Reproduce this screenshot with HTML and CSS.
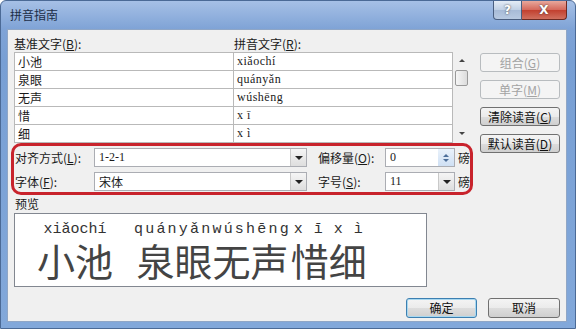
FILE: index.html
```html
<!DOCTYPE html>
<html lang="zh-CN">
<head>
    <meta charset="UTF-8">
    <title>拼音指南</title>
    <link rel="stylesheet" href="styles.css">
</head>
<body>
    <div class="window">
        <!-- Barra de título -->
        <div class="titlebar">
            <span class="title">拼音指南</span>
            <div class="caption-btns">
                <span class="cap-btn help">?</span>
                <span class="cap-btn close">X</span>
            </div>
        </div>

        <div class="client">
            <div class="top">
                <div class="lists">
                    <div class="list-labels">
                        <span>基准文字(<u>B</u>):</span>
                        <span>拼音文字(<u>R</u>):</span>
                    </div>
                    <div class="list-wrap">
                        <div class="grid">
                            <div class="cell">小池</div><div class="cell py">xiǎochí</div>
                            <div class="cell">泉眼</div><div class="cell py">quányǎn</div>
                            <div class="cell">无声</div><div class="cell py">wúshēng</div>
                            <div class="cell">惜</div><div class="cell py">x ī</div>
                            <div class="cell">细</div><div class="cell py">x ì</div>
                        </div>
                        <div class="scrollbar">
                            <span class="arrow-up"></span>
                            <span class="thumb"></span>
                            <span class="arrow-down"></span>
                        </div>
                    </div>
                </div>

                <div class="side">
                    <button class="btn disabled">组合(<u>G</u>)</button>
                    <button class="btn disabled">单字(<u>M</u>)</button>
                    <button class="btn">清除读音(<u>C</u>)</button>
                    <button class="btn">默认读音(<u>D</u>)</button>
                </div>
            </div>

            <!-- Caixa destacada -->
            <div class="options">
                <div class="opt-row">
                    <span class="lbl1">对齐方式(<u>L</u>):</span>
                    <div class="combo wide"><span>1-2-1</span><span class="drop"></span></div>
                    <span class="lbl2">偏移量(<u>O</u>):</span>
                    <div class="combo small"><span>0</span><span class="spin"><i class="up"></i><i class="down"></i></span></div>
                    <span class="unit">磅</span>
                </div>
                <div class="opt-row">
                    <span class="lbl1">字体(<u>F</u>):</span>
                    <div class="combo wide"><span>宋体</span><span class="drop"></span></div>
                    <span class="lbl2">字号(<u>S</u>):</span>
                    <div class="combo small"><span>11</span><span class="drop"></span></div>
                    <span class="unit">磅</span>
                </div>
            </div>

            <div class="preview-label">预览</div>
            <div class="preview">
                <div class="group g1">
                    <div class="pin">xiǎochí</div>
                    <div class="base">小池</div>
                </div>
                <div class="group g2">
                    <div class="pin">quányǎnwúshēng</div>
                    <div class="base">泉眼无声</div>
                </div>
                <div class="group g3">
                    <div class="pin">x ī x ì</div>
                    <div class="base">惜细</div>
                </div>
            </div>

            <div class="footer">
                <button class="btn default">确定</button>
                <button class="btn">取消</button>
            </div>
        </div>
    </div>
</body>
</html>
```

FILE: styles.css
```css
body {
    margin: 0;
    background-color: #fff;
    font-family: "Noto Sans CJK SC", "Liberation Sans", sans-serif;
    font-size: 12px;
    color: #1a1a1a;
}
u {
    text-decoration: underline;
}
.window {
    width: 576px;
    height: 329px;
    box-sizing: border-box;
    border: 1px solid #4b6a96;
    border-radius: 6px 6px 0 0;
    background: linear-gradient(to bottom, #a6c0e6, #7fa3d6 28px, #789fd4 60px, #82a8da);
    padding: 0 8px 6px 6px;
}
.titlebar {
    height: 28px;
    display: flex;
    justify-content: space-between;
    align-items: flex-start;
}
.title {
    margin-top: 5px;
    margin-left: 3px;
    font-size: 12px;
    color: #1b2d47;
}
.caption-btns {
    display: flex;
}
.cap-btn {
    height: 19px;
    box-sizing: border-box;
    border: 1px solid #4a5f80;
    border-top: none;
    display: flex;
    align-items: center;
    justify-content: center;
    font-family: "DejaVu Sans", sans-serif;
    font-weight: bold;
    color: #fff;
    text-shadow: 0 0 2px #333;
}
.help {
    width: 29px;
    border-radius: 0 0 0 4px;
    background: linear-gradient(to bottom, #e4ecf6, #bfcfe4 50%, #a7bbd7 51%, #b8cae2);
    font-size: 12px;
}
.close {
    width: 45px;
    border-left: none;
    border-color: #6d2a22;
    border-radius: 0 0 4px 0;
    background: linear-gradient(to bottom, #e8a89c, #d4675a 50%, #c2402f 51%, #d0705f);
    font-size: 12px;
}
.client {
    height: 293px;
    box-sizing: border-box;
    background-color: #f0f0f0;
    border: 1px solid #8fa6c6;
    padding: 6px 6px 0 6px;
}
.top {
    display: flex;
    gap: 9px;
    height: 107px;
}
.lists {
    width: 457px;
}
.list-labels {
    display: grid;
    grid-template-columns: 220px 220px;
    height: 16px;
    line-height: 16px;
}
.list-wrap {
    display: flex;
}
.grid {
    display: grid;
    grid-template-columns: 218px 218px;
    grid-auto-rows: 17px;
    gap: 1px;
    padding: 1px;
    background-color: #b9b9b9;
}
.cell {
    background-color: #fff;
    line-height: 17px;
    padding-left: 3px;
    font-size: 12px;
    overflow: hidden;
}
.cell.py {
    font-family: "Liberation Serif", serif;
    font-size: 12px;
    letter-spacing: 0.5px;
}
.scrollbar {
    width: 18px;
    position: relative;
    background-color: #f0f0f0;
}
.arrow-up, .arrow-down {
    position: absolute;
    left: 6px;
    width: 0;
    height: 0;
    border-left: 3px solid transparent;
    border-right: 3px solid transparent;
}
.arrow-up {
    top: 7px;
    border-bottom: 3px solid #444;
}
.arrow-down {
    bottom: 8px;
    border-top: 3px solid #444;
}
.thumb {
    position: absolute;
    top: 18px;
    left: 2px;
    width: 13px;
    height: 16px;
    box-sizing: border-box;
    border: 1px solid #9a9a9a;
    border-radius: 2px;
    background: linear-gradient(to right, #f6f6f6, #dcdcdc);
}
.side {
    width: 80px;
    padding-top: 17px;
    display: flex;
    flex-direction: column;
    gap: 8px;
}
.side .btn {
    flex-shrink: 0;
}
.btn {
    font-family: "Noto Sans CJK SC", sans-serif;
    font-size: 12px;
    height: 19px;
    padding: 0;
    line-height: 16px;
    box-sizing: border-box;
    border: 1px solid #707070;
    border-radius: 3px;
    background: linear-gradient(to bottom, #f4f4f4, #ebebeb 50%, #dddddd 51%, #cfcfcf);
    color: #111;
}
.btn.disabled {
    border-color: #b8bcbf;
    background: #f4f4f4;
    color: #a3a3a3;
}
.options {
    margin-left: -3px;
    width: 462px;
    height: 52px;
    box-sizing: border-box;
    border: 3px solid #c8232c;
    border-radius: 10px;
    padding: 2px 0 0 1px;
    display: flex;
    flex-direction: column;
    gap: 5px;
}
.opt-row {
    display: flex;
    align-items: center;
    height: 19px;
}
.lbl1 {
    width: 79px;
}
.lbl2 {
    margin-left: 11px;
    width: 67px;
}
.combo {
    height: 19px;
    box-sizing: border-box;
    border: 1px solid #abadb3;
    background-color: #fff;
    display: flex;
    justify-content: space-between;
    align-items: center;
    padding-left: 4px;
    font-family: "Liberation Serif", "Noto Sans CJK SC", serif;
    font-size: 12px;
}
.combo.wide {
    width: 213px;
}
.combo.small {
    width: 70px;
}
.drop {
    width: 16px;
    height: 17px;
    box-sizing: border-box;
    border-left: 1px solid #c9c9c9;
    background: linear-gradient(to bottom, #f5f5f5, #dedede);
    position: relative;
}
.drop::after {
    content: "";
    position: absolute;
    left: 4px;
    top: 7px;
    border-left: 4px solid transparent;
    border-right: 4px solid transparent;
    border-top: 4px solid #222;
}
.spin {
    width: 16px;
    height: 17px;
    display: flex;
    flex-direction: column;
    align-items: center;
    justify-content: center;
    gap: 2px;
    background: linear-gradient(to bottom, #eaf2fb, #cfe0f4);
}
.spin i {
    width: 0;
    height: 0;
    border-left: 3px solid transparent;
    border-right: 3px solid transparent;
}
.spin .up {
    border-bottom: 3px solid #4d6f9a;
}
.spin .down {
    border-top: 3px solid #4d6f9a;
}
.unit {
    margin-left: 3px;
}
.preview-label {
    height: 18px;
    line-height: 18px;
    padding-left: 1px;
}
.preview {
    width: 413px;
    height: 74px;
    box-sizing: border-box;
    border: 1px solid #828790;
    background-color: #fff;
    display: flex;
    align-items: flex-start;
    padding: 8px 0 0 22px;
}
.group {
    display: flex;
    flex-direction: column;
    align-items: center;
}
.pin {
    font-family: "Liberation Mono", monospace;
    font-size: 15px;
    line-height: 16px;
    color: #333;
}
.g2 .pin {
    letter-spacing: 2.2px;
}
.g3 .pin {
    letter-spacing: 1px;
}
.base {
    margin-top: 1px;
    font-family: "Noto Sans CJK SC", sans-serif;
    font-size: 38px;
    line-height: 42px;
    color: #444;
}
.g1 {
    margin-right: 21px;
}
.footer {
    display: flex;
    justify-content: flex-end;
    gap: 11px;
    margin-top: 11px;
}
.footer .btn {
    height: 20px;
}
.footer .btn:first-child {
    width: 71px;
}
.footer .btn:last-child {
    width: 72px;
}
.btn.default {
    border-color: #3c7fb1;
    box-shadow: inset 0 0 0 1px #a8d8f0;
}
```
